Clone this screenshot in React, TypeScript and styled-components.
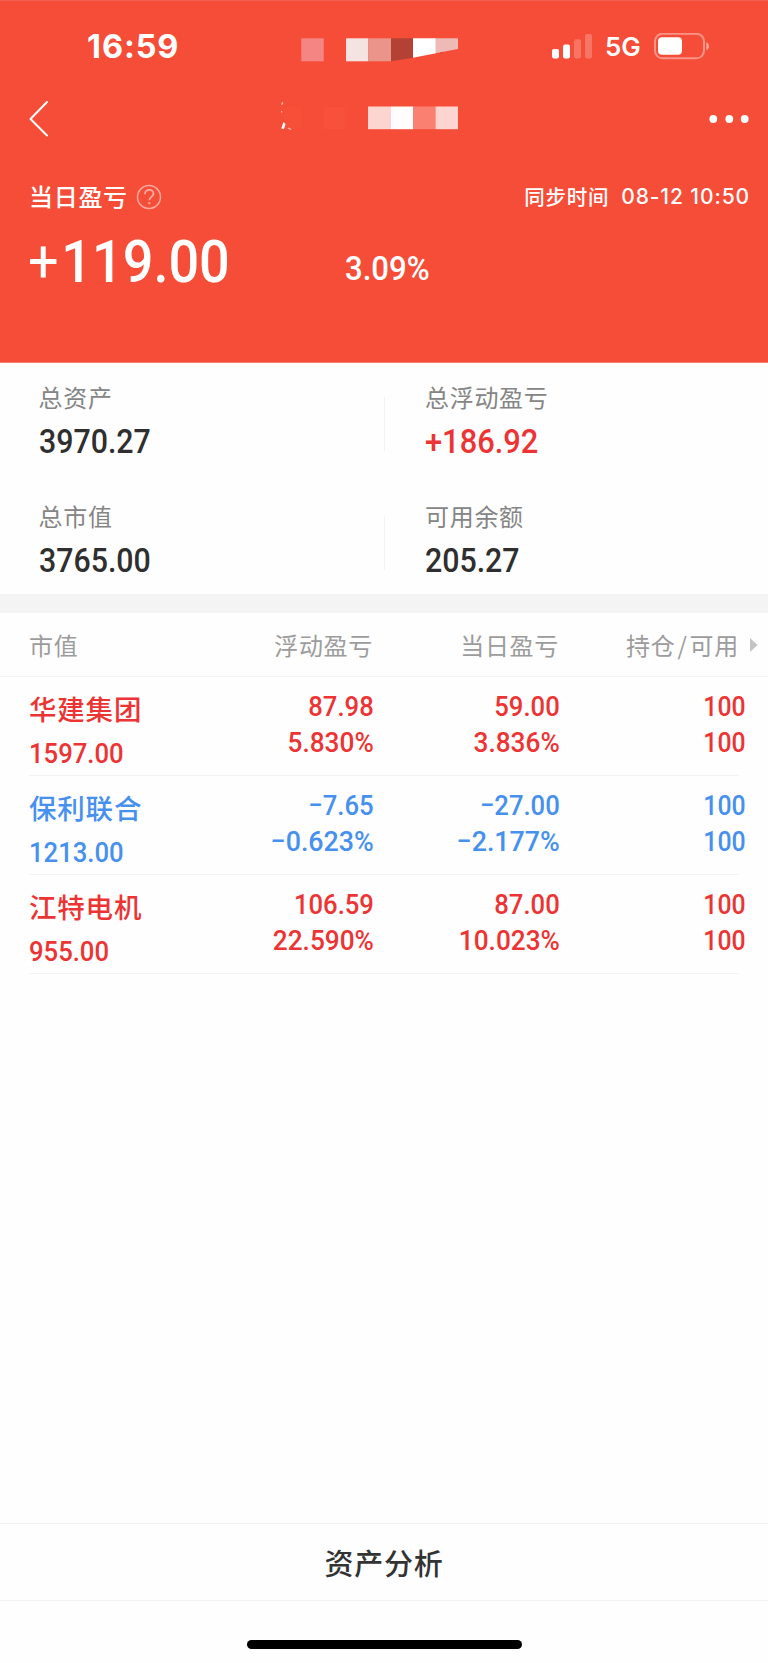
import React from 'react';
import styled, { createGlobalStyle } from 'styled-components';

const RED = '#ec3434';
const BLUE = '#4690ee';
const CJK = `'Noto Sans CJK SC', sans-serif`;

const GlobalStyle = createGlobalStyle`
  * { box-sizing: border-box; }
  html, body { margin: 0; background: #fefefe; }
  body { font-family: ${CJK}; }
`;

const Screen = styled.div`
  width: 768px;
  height: 1663px;
  display: flex;
  flex-direction: column;
  background: #fefefe;
  overflow: hidden;
`;

const Hero = styled.header`
  height: 363px;
  flex: none;
  background: #f64d38;
  border-top: 1px solid #ef5e50;
  border-bottom: 1px solid #f4806f;
  color: #fff;
`;

const StatusBar = styled.div`
  height: 90px;
  display: flex;
  align-items: flex-start;
  padding: 30px 58px 0 86px;
`;

const Clock = styled.span`
  width: 215px;
  padding-left: 1px;
  font: 700 32.5px/32px Inter, sans-serif;
  letter-spacing: 0.9px;
`;

const StatusIcons = styled.div`
  margin-left: auto;
  height: 32px;
  display: flex;
  align-items: center;
`;

const Network = styled.span`
  width: 48px;
  margin-left: 13px;
  font: 600 26px/32px Inter, sans-serif;
`;

const NavBar = styled.nav`
  height: 56px;
  display: flex;
  align-items: center;
  padding: 0 19px 0 28px;
`;

const NavTitle = styled.div`
  margin-left: 231px;
  height: 38px;
`;

const MoreIcon = styled.svg`
  margin-left: auto;
`;

const DayHead = styled.div`
  height: 40px;
  margin-top: 30px;
  padding: 0 18px 2px 29px;
  display: flex;
  align-items: center;
`;

const Label = styled.span<{ $size?: number; $color?: string; $weight?: number; $gap?: number }>`
  font-family: ${CJK};
  font-size: ${p => p.$size ?? 24}px;
  line-height: 34px;
  font-weight: ${p => p.$weight ?? 400};
  color: ${p => p.$color ?? '#858585'};
  letter-spacing: ${p => p.$gap ?? 0.7}px;
  white-space: pre;
`;

const Slash = styled.span`
  margin: 0 2px;
`;

const HelpIcon = styled.svg`
  margin: 2px 0 0 8px;
`;

const SyncTime = styled.div`
  margin-left: auto;
  display: flex;
  align-items: center;
  gap: 12px;
`;

const SyncDate = styled.span`
  padding-top: 1px;
  font: 500 21px/34px Inter, sans-serif;
  letter-spacing: 0.9px;
`;

const Figure = styled.span<{ $size?: number; $color?: string; $scale?: number; $end?: boolean }>`
  display: block;
  font-family: Roboto, sans-serif;
  font-weight: 500;
  font-size: ${p => p.$size ?? 28.5}px;
  line-height: 36px;
  color: ${p => p.$color ?? '#2f2f2f'};
  white-space: nowrap;
  transform: scaleX(${p => p.$scale ?? 0.9});
  transform-origin: ${p => (p.$end ? 'right' : 'left')} center;
`;

const HeroSign = styled.span`
  font-weight: 400;
  margin-right: 3px;
`;

const DayFigures = styled.div`
  display: grid;
  grid-template-columns: 317px auto;
  align-items: center;
  padding: 20px 0 0 28px;
`;

const DayPercent = styled.div`
  padding-top: 14px;
`;

const Summary = styled.section`
  height: 231px;
  flex: none;
  display: grid;
  grid-template-columns: 1fr 1fr;
  grid-template-rows: 118.5px 1fr;
`;

const SummaryCell = styled.div<{ $right?: boolean }>`
  display: flex;
  flex-direction: column;
  gap: 10px;
  padding: 17px 0 0 ${p => (p.$right ? 41 : 38.5)}px;
  background: ${p =>
    p.$right ? 'linear-gradient(#f3f3f3, #f3f3f3) 0 34px / 1px 54px no-repeat' : 'none'};
`;

const Band = styled.div`
  height: 19px;
  flex: none;
  background: #f4f4f4;
`;

const TableHead = styled.div`
  height: 64px;
  flex: none;
  display: grid;
  grid-template-columns: 173px 171px 186px 180px auto;
  align-items: center;
  padding: 0 0 0 29px;
  border-bottom: 1px solid #f4f4f4;
`;

const HeadCell = styled.div<{ $end?: boolean }>`
  text-align: ${p => (p.$end ? 'right' : 'left')};
`;

const Rows = styled.div`
  padding: 0 29px;
`;

const Row = styled.div`
  height: 99px;
  display: grid;
  grid-template-columns: 173px 172px 186px 186px;
  border-bottom: 1px solid #f3f3f3;
`;

const NameCell = styled.div`
  display: flex;
  flex-direction: column;
  gap: 11px;
  padding-top: 14px;
`;

const PairCell = styled.div`
  display: flex;
  flex-direction: column;
  align-items: flex-end;
  padding-top: 12px;
`;

const Footer = styled.footer`
  margin-top: auto;
  height: 140px;
  flex: none;
  display: flex;
  flex-direction: column;
  align-items: center;
  border-top: 1px solid #f2f2f2;
`;

const AnalysisButton = styled.div`
  width: 100%;
  height: 77px;
  display: flex;
  align-items: center;
  justify-content: center;
  border-bottom: 1px solid #f2f2f2;
`;

const HomeBar = styled.div`
  width: 275px;
  height: 9px;
  margin-top: 39px;
  border-radius: 5px;
  background: #000;
`;

interface Holding {
  name: string;
  value: string;
  float: [string, string];
  day: [string, string];
  qty: [string, string];
  color: string;
}

const holdings: Holding[] = [
  { name: '华建集团', value: '1597.00', float: ['87.98', '5.830%'], day: ['59.00', '3.836%'], qty: ['100', '100'], color: RED },
  { name: '保利联合', value: '1213.00', float: ['−7.65', '−0.623%'], day: ['−27.00', '−2.177%'], qty: ['100', '100'], color: BLUE },
  { name: '江特电机', value: '955.00', float: ['106.59', '22.590%'], day: ['87.00', '10.023%'], qty: ['100', '100'], color: RED },
];

const summary = [
  { label: '总资产', value: '3970.27', scale: 0.905 },
  { label: '总浮动盈亏', value: '+186.92', scale: 0.92, color: RED },
  { label: '总市值', value: '3765.00', scale: 0.905 },
  { label: '可用余额', value: '205.27', scale: 0.905 },
];

const figureScale = (v: string) => {
  if (v.endsWith('%')) return v.startsWith('−') ? 0.94 : 0.92;
  return v.includes('.') ? 0.9 : 0.87;
};

const Pair = ({ values, color }: { values: [string, string]; color: string }) => (
  <PairCell>
    {values.map((v, i) => (
      <Figure key={i} $color={color} $scale={figureScale(v)} $end>{v}</Figure>
    ))}
  </PairCell>
);

export default function App() {
  return (
    <Screen>
      <GlobalStyle />
      <Hero>
        <StatusBar>
          <Clock>16:59</Clock>
          <svg width="158" height="32" viewBox="0 0 158 32">
            <rect x="0.3" y="7.3" width="22.4" height="23" fill="#f58583" />
            <rect x="45" y="7.3" width="22.3" height="23" fill="#f5e3e1" />
            <rect x="67.3" y="7.3" width="22.7" height="23" fill="#eb9489" />
            <path d="M90 7.3h22.3v19.4L90 30.3z" fill="#b34234" />
            <path d="M112 7.3h23v15L112 26.7z" fill="#fff" />
            <path d="M134.5 7.3h22.5v10.7L134.5 22.3z" fill="#edbab5" />
            <path d="M139 22l3-1.2l-2 2z" fill="#b34234" />
          </svg>
          <StatusIcons>
            <svg width="40" height="26" viewBox="0 0 40 26" fill="#fff">
              <rect x="0" y="15" width="7" height="9.5" rx="2" />
              <rect x="11" y="10.5" width="7" height="14" rx="2" />
              <rect x="22" y="5.2" width="7" height="19.3" rx="2" opacity=".22" />
              <rect x="33" y="0" width="7" height="24.5" rx="2" opacity=".22" />
            </svg>
            <Network>5G</Network>
            <svg width="57" height="28" viewBox="0 0 57 28">
              <rect x="2" y="0.8" width="49" height="24.5" rx="7.5" fill="none" stroke="#fff" strokeOpacity=".4" strokeWidth="2" />
              <rect x="5" y="4.3" width="24" height="17.5" rx="4" fill="#fff" />
              <path d="M53.3 9.3c3.5 1 3.5 7 0 8z" fill="#fff" opacity=".5" />
            </svg>
          </StatusIcons>
        </StatusBar>
        <NavBar>
          <svg width="22" height="38" viewBox="0 0 22 38" fill="none" stroke="#fff" strokeWidth="2" strokeLinecap="round" strokeLinejoin="round">
            <path d="M19 2L2.5 19L19 35.5" />
          </svg>
          <NavTitle>
            <svg width="178" height="30" viewBox="0 0 178 30">
              <rect x="3" y="7" width="17" height="22" fill="#f75039" />
              <path d="M2 2.5l-1.5 2 M0.5 11v1.5 M7 28l3 1.5" stroke="#fbb9ae" strokeWidth="1.3" fill="none" />
              <path d="M0.3 28.5L2.5 22L4.5 24L3 29z" fill="#fff" />
              <rect x="43" y="7" width="21" height="22" fill="#f7503b" />
              <rect x="87" y="6.5" width="23" height="22.7" fill="#fdd5d0" />
              <rect x="110" y="6.5" width="22" height="22.7" fill="#fffcfd" />
              <rect x="132" y="6.5" width="22.5" height="22.7" fill="#fa8071" />
              <rect x="154.5" y="6.5" width="22.5" height="22.7" fill="#fdd5d0" />
            </svg>
          </NavTitle>
          <MoreIcon width="40" height="8" viewBox="0 0 40 8" fill="#fff">
            <circle cx="4.3" cy="4" r="3.9" />
            <circle cx="20.3" cy="4" r="3.9" />
            <circle cx="35.7" cy="4" r="3.9" />
          </MoreIcon>
        </NavBar>
        <DayHead>
          <Label $color="#fff" $weight={500}>当日盈亏</Label>
          <HelpIcon width="26" height="26" viewBox="0 0 26 26" fill="none" stroke="#fcab9f" strokeWidth="1.5">
            <circle cx="13" cy="13" r="11.5" />
            <path d="M9 10.3c0-6 8.5-5.5 8.5-.8 0 3.2-4.2 3.5-4.2 6.8" strokeWidth="1.8" />
            <path d="M13.3 18.2v2" strokeWidth="2.2" />
          </HelpIcon>
          <SyncTime>
            <Label $color="#fff" $size={20.5} $weight={500}>同步时间</Label>
            <SyncDate>08-12 10:50</SyncDate>
          </SyncTime>
        </DayHead>
        <DayFigures>
          <Figure $color="#fff" $size={60} $scale={0.9}><HeroSign>+</HeroSign>119.00</Figure>
          <DayPercent>
            <Figure $color="#fff" $size={33.5} $scale={0.93}>3.09%</Figure>
          </DayPercent>
        </DayFigures>
      </Hero>
      <Summary>
        {summary.map((s, i) => (
          <SummaryCell key={s.label} $right={i % 2 === 1}>
            <Label>{s.label}</Label>
            <Figure $size={33.5} $scale={s.scale} $color={s.color}>{s.value}</Figure>
          </SummaryCell>
        ))}
      </Summary>
      <Band />
      <TableHead>
        <HeadCell><Label $color="#9c9c9c">市值</Label></HeadCell>
        <HeadCell $end><Label $color="#9c9c9c">浮动盈亏</Label></HeadCell>
        <HeadCell $end><Label $color="#9c9c9c">当日盈亏</Label></HeadCell>
        <HeadCell $end><Label $color="#9c9c9c">持仓<Slash>/</Slash>可用</Label></HeadCell>
        <svg width="20" height="14" viewBox="0 0 20 14">
          <path d="M11 0L18.5 7L11 14z" fill="#c4c4c4" />
        </svg>
      </TableHead>
      <Rows>
        {holdings.map(h => (
          <Row key={h.name}>
            <NameCell>
              <Label $size={27.5} $color={h.color} $weight={500} $gap={0.8}>{h.name}</Label>
              <Figure $color={h.color}>{h.value}</Figure>
            </NameCell>
            <Pair values={h.float} color={h.color} />
            <Pair values={h.day} color={h.color} />
            <Pair values={h.qty} color={h.color} />
          </Row>
        ))}
      </Rows>
      <Footer>
        <AnalysisButton>
          <Label $size={29} $color="#333" $weight={500}>资产分析</Label>
        </AnalysisButton>
        <HomeBar />
      </Footer>
    </Screen>
  );
}
